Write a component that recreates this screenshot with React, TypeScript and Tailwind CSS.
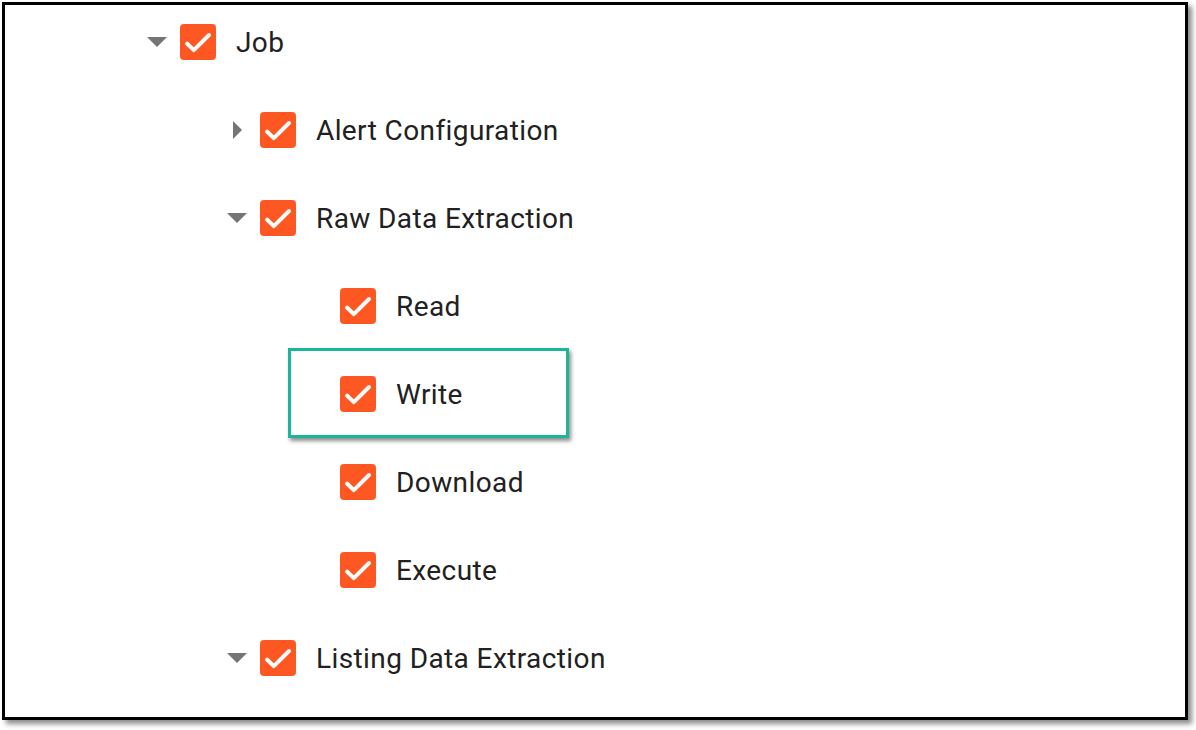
type Node = {
  label: string;
  level: 0 | 1 | 2;
  caret?: "down" | "right";
  highlight?: boolean;
};

const rows: Node[] = [
  { label: "Job", level: 0, caret: "down" },
  { label: "Alert Configuration", level: 1, caret: "right" },
  { label: "Raw Data Extraction", level: 1, caret: "down" },
  { label: "Read", level: 2 },
  { label: "Write", level: 2, highlight: true },
  { label: "Download", level: 2 },
  { label: "Execute", level: 2 },
  { label: "Listing Data Extraction", level: 1, caret: "down" },
];

const indent = {
  0: "pl-[142px]",
  1: "pl-[222px]",
  2: "pl-[302px]",
};

function Caret({ dir }: { dir?: "down" | "right" }) {
  return (
    <div className="w-[20px] h-[20px] flex items-center justify-center shrink-0">
      {dir === "down" && (
        <svg width="20" height="10" viewBox="0 0 20 10">
          <path d="M0 0 L20 0 L10 10 Z" fill="#757575" />
        </svg>
      )}
      {dir === "right" && (
        <svg width="9" height="18" viewBox="0 0 9 18">
          <path d="M0 0 L9 9 L0 18 Z" fill="#757575" />
        </svg>
      )}
    </div>
  );
}

function Check() {
  return (
    <div className="ml-[13px] w-[36px] h-[36px] rounded-[4px] bg-[#ff5722] shrink-0">
      <svg width="36" height="36" viewBox="0 0 36 36">
        <polyline
          points="7,19.5 13.8,26.2 29,11"
          fill="none"
          stroke="#ffffff"
          strokeWidth="3.9"
          strokeLinecap="round"
          strokeLinejoin="round"
        />
      </svg>
    </div>
  );
}

export default function App() {
  return (
    <div className="w-[1196px] h-[730px] bg-white pl-[2px] pt-[2px] font-['Roboto','Liberation_Sans',sans-serif]">
      <div className="w-[1186px] h-[718px] border-[3px] border-black bg-white shadow-[4px_4px_5px_rgba(0,0,0,0.45)] pt-[13px] flex flex-col gap-10">
        {rows.map((r) => (
          <div key={r.label} className={`relative h-12 flex items-center ${indent[r.level]}`}>
            <Caret dir={r.caret} />
            <Check />
            <span className="ml-[20px] translate-y-px text-[28px] leading-none tracking-[0.4px] text-[#212121]">{r.label}</span>
            {r.highlight && (
              <div className="absolute left-[283px] top-[-22px] w-[281px] h-[90px] border-[3px] border-[#1bb697] shadow-[2px_3px_4px_rgba(0,0,0,0.45)]" />
            )}
          </div>
        ))}
      </div>
    </div>
  );
}
